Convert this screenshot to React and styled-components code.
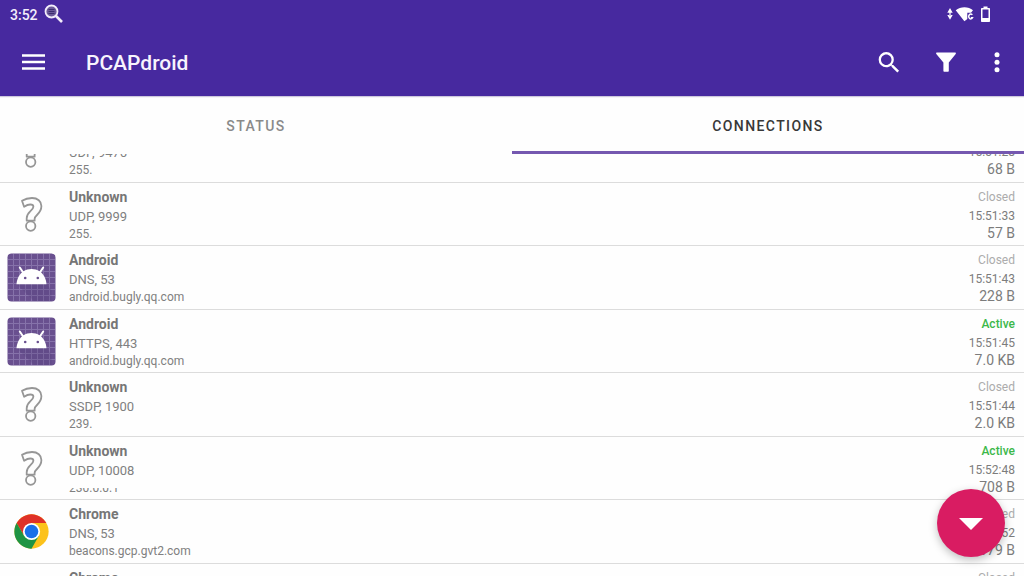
import React, { useLayoutEffect, useRef } from "react";
import styled, { createGlobalStyle, css } from "styled-components";

const Global = createGlobalStyle`
  *, *::before, *::after { box-sizing: border-box; }
  body { margin: 0; background: #fff; font-family: Roboto, "Liberation Sans", sans-serif; }
`;

const Screen = styled.div`
  display: flex;
  flex-direction: column;
  height: 100vh;
  overflow: hidden;
  background: #fefefe;
`;

const Header = styled.header`
  flex: none;
  background: #47299f;
  color: #fff;
  box-shadow: 0 1px 1px rgba(60, 40, 120, 0.25);
`;

const StatusBar = styled.div`
  display: flex;
  align-items: center;
  height: 28px;
  padding: 0 31px 0 10px;
`;

const Clock = styled.time`
  margin-right: 6px;
  padding-top: 2px;
  font-size: 14px;
  font-weight: 500;
  line-height: 26px;
  color: #f3edfb;
`;

const StatusIcons = styled.div`
  display: flex;
  align-items: center;
  margin-left: auto;
`;

const Toolbar = styled.div`
  display: flex;
  align-items: center;
  height: 68px;
  padding: 0 20px 0 19px;
`;

const Title = styled.h1`
  flex: 1;
  margin: 0 0 0 37px;
  padding-top: 2px;
  font-size: 21px;
  font-weight: 500;
  line-height: 24px;
  color: #f8f4fd;
`;

const Actions = styled.div`
  display: flex;
  gap: 28px;
`;

const IconButton = styled.button`
  display: flex;
  align-items: center;
  justify-content: center;
  width: ${(p) => (p.$narrow ? "15px" : "30px")};
  height: 40px;
  padding: 0;
  border: 0;
  background: none;
  color: #fff;
  cursor: pointer;
`;

const Tabs = styled.div`
  display: flex;
  flex: none;
  height: 58px;
`;

const Tab = styled.button`
  flex: 1;
  padding: 4px 0 0;
  border: 0;
  border-bottom: 3px solid ${(p) => (p.$active ? "#7558b0" : "transparent")};
  background: none;
  font: 500 14px/20px Roboto, "Liberation Sans", sans-serif;
  letter-spacing: 0.1em;
  text-transform: uppercase;
  color: ${(p) => (p.$active ? "#383838" : "#8a8a8a")};
  cursor: pointer;
`;

const List = styled.ul`
  flex: 1;
  min-height: 0;
  margin: 0;
  padding: 0;
  overflow-y: auto;
  scrollbar-width: none;
  list-style: none;
`;

const Row = styled.li`
  display: flex;
  height: 63px;
  padding: 5px 9px 0 7px;
  border-bottom: 1px solid #dcdcdc;

  &:nth-child(odd) { height: 64px; }
`;

const AppIcon = styled.div`
  display: flex;
  flex: none;
  align-items: center;
  justify-content: center;
  width: 49px;
  height: 53px;
  margin-right: 13px;
`;

const Details = styled.div`
  flex: 1;
  min-width: 0;
`;

const Name = styled.div`
  font-size: 14px;
  font-weight: 700;
  line-height: 19px;
  color: #767676;
`;

const Protocol = styled.div`
  font-size: 13px;
  line-height: 19px;
  color: #808080;
`;

const Host = styled.div`
  font-size: 12px;
  line-height: 16px;
  color: #808080;
  ${(p) => p.$masked && css`clip-path: inset(8px 0 0 0);`}
`;

const Stats = styled.div`
  flex: none;
  text-align: right;
`;

const State = styled.div`
  font-size: 12px;
  font-weight: ${(p) => (p.$active ? 500 : 400)};
  line-height: 19px;
  color: ${(p) => (p.$active ? "#3cb84a" : "#acacac")};
`;

const Time = styled.div`
  font-size: 12px;
  line-height: 18px;
  color: #7c7c7c;
`;

const Size = styled.div`
  font-size: 14px;
  line-height: 16px;
  color: #7c7c7c;
`;

const Fab = styled.button`
  position: fixed;
  right: 19px;
  bottom: 19px;
  display: flex;
  align-items: center;
  justify-content: center;
  width: 68px;
  height: 68px;
  padding: 2px 0 0;
  border: 0;
  border-radius: 50%;
  background: #d91c62;
  box-shadow: 0 3px 8px rgba(0, 0, 0, 0.25);
  cursor: pointer;
`;

const Notice = () => (
  <svg width="20" height="20" viewBox="0 0 20 20" fill="none" stroke="#f3edfb">
    <circle cx="7.5" cy="7.5" r="6" strokeWidth="1.8" fill="#6c5a9a" />
    <path d="M4.500 5.500h6M4.500 7.500h6M4.500 9.500h6" stroke="#3c2d70" strokeWidth="1" />
    <path d="M12 12l6 6" strokeWidth="2.6" />
  </svg>
);

const Network = () => (
  <svg width="46" height="20" viewBox="0 0 46 20" fill="#fff">
    <path d="M0.300 8.700L3 4l2.700 4.700zM0.300 11L3 15.700 5.700 11zM2.400 8h1.200v3.500H2.400z" />
    <path d="M8.700 6.200C13.500 2.300 21.500 2.300 26 6.200L24 8.800H20.300v6.200L17.400 17.300z" />
    <path d="M25.300 10.800a2 2.500 0 1 0 .2 3h-1.700" fill="none" stroke="#fff" strokeWidth="1.400" />
    <path fillRule="evenodd" d="M36.500 2.500h4v1.500h1.700q.8 0 .8.800v12.400q0 .8-.8.800h-7.400q-.8 0-.8-.8V4.800q0-.8.8-.8H36.500zM35.500 5.500V14h6V5.500z" />
  </svg>
);

const Menu = () => (
  <svg width="24" height="18" viewBox="0 0 24 18" fill="none" stroke="#fff" strokeWidth="2.400">
    <path d="M0 2.500h23M0 9h23M0 15.500h23" />
  </svg>
);

const Search = () => (
  <svg width="28" height="28" viewBox="-1 -0.5 24 24" fill="#fff">
    <path d="M15.500 14h-.79l-.28-.27A6.471 6.471 0 0 0 16 9.500 6.500 6.500 0 1 0 9.500 16c1.610 0 3.090-.59 4.230-1.570l.27.28v.79l5 4.990L20.490 19l-4.990-5zm-6 0C7.010 14 5 11.990 5 9.500S7.010 5 9.500 5 14 7.010 14 9.500 11.990 14 9.500 14z" />
  </svg>
);

const Filter = () => (
  <svg width="22" height="22" viewBox="0 0 22 22" fill="#fff">
    <path d="M1.500 1.500h19q.800.700.200 1.500L13.800 11.500V20q0 .8-.8.800H9.200q-.8 0-.8-.8V11.500L1.300 3Q.700 2.200 1.500 1.500z" />
  </svg>
);

const More = () => (
  <svg width="8" height="22" viewBox="0 0 8 22" fill="#fff">
    <circle cx="4" cy="3.800" r="2.500" />
    <circle cx="4" cy="11.300" r="2.500" />
    <circle cx="4" cy="18.800" r="2.500" />
  </svg>
);

const Question = () => (
  <svg width="24" height="38" viewBox="0 0 24 38" fill="none" stroke="#969696" strokeWidth="1.800" strokeLinejoin="round">
    <path d="M2 4.800C5 2.900 8.500 2 12 2c5.600 0 9.400 3.300 9.400 8 0 4-1.800 6.500-4.400 9-1.800 1.700-2.400 2.500-2.400 4v1.700H6.700v-2.400c0-3 1.100-4.800 3.500-7 2-1.900 3.200-2.900 3.200-4.500 0-1.500-1.100-2.300-3.100-2.300-2 0-4 .8-6.200 2.200z" />
    <circle cx="10.700" cy="30.100" r="4.700" />
  </svg>
);

const LINES = [6, 12, 18, 24, 30, 36, 42];

const AndroidLogo = () => (
  <svg width="49" height="49" viewBox="0 0 49 49">
    <rect x="0.500" y="0.500" width="48" height="48" rx="4" fill="#69508f" />
    <g stroke="#8672aa" strokeWidth="1">
      {LINES.map((n) => (
        <path key={n} d={`M${n + 0.5} 1v47M1 ${n + 0.5}h47`} />
      ))}
    </g>
    <path d="M9.500 31h30l5 6v11H27z" fill="#4e3b78" opacity="0.250" />
    <path d="M12.800 14.500l4 6M36.200 14.500l-4 6" stroke="#fff" strokeWidth="2" strokeLinecap="round" />
    <path d="M9.500 31.200C10 25 12.500 21 16.500 18.200 21 15.400 28 15.400 32.500 18.200 36.500 21 39 25 39.500 31.200z" fill="#fff" />
    <circle cx="18.200" cy="25" r="1.300" fill="#69508f" />
    <circle cx="30.800" cy="25" r="1.300" fill="#69508f" />
  </svg>
);

const ChromeLogo = () => (
  <svg width="35" height="35" viewBox="0 0 48 48">
    <circle cx="24" cy="24" r="23.500" fill="#fcc21b" />
    <path d="M24 12.250h20.350A23.500 23.500 0 0 0 3.650 12.250L13.820 29.870z" fill="#df3128" />
    <path d="M3.650 12.250A23.500 23.500 0 0 0 24 47.500l10.170-17.630L24 24 13.820 29.870z" fill="#1f9444" />
    <circle cx="24" cy="24" r="11.750" fill="#fff" />
    <circle cx="24" cy="24" r="9.300" fill="#1b6fe8" />
  </svg>
);

const ICONS = { Unknown: Question, Android: AndroidLogo, Chrome: ChromeLogo };

const CONNECTIONS = [
  { app: "Unknown", protocol: "UDP, 9476", host: "255.", state: "Closed", time: "15:51:28", size: "68 B" },
  { app: "Unknown", protocol: "UDP, 9999", host: "255.", state: "Closed", time: "15:51:33", size: "57 B" },
  { app: "Android", protocol: "DNS, 53", host: "android.bugly.qq.com", state: "Closed", time: "15:51:43", size: "228 B" },
  { app: "Android", protocol: "HTTPS, 443", host: "android.bugly.qq.com", state: "Active", time: "15:51:45", size: "7.0 KB" },
  { app: "Unknown", protocol: "SSDP, 1900", host: "239.", state: "Closed", time: "15:51:44", size: "2.0 KB" },
  { app: "Unknown", protocol: "UDP, 10008", host: "230.0.0.1", masked: true, state: "Active", time: "15:52:48", size: "708 B" },
  { app: "Chrome", protocol: "DNS, 53", host: "beacons.gcp.gvt2.com", state: "Closed", time: "15:52:52", size: "179 B" },
  { app: "Chrome", protocol: "HTTPS, 443", host: "beacons.gcp.gvt2.com", state: "Closed", time: "15:52:52", size: "7.1 KB" },
];

const SCROLL_OFFSET = 35;

function Connection({ app, protocol, host, masked, state, time, size }) {
  const Icon = ICONS[app];
  return (
    <Row>
      <AppIcon><Icon /></AppIcon>
      <Details>
        <Name>{app}</Name>
        <Protocol>{protocol}</Protocol>
        <Host $masked={masked}>{host}</Host>
      </Details>
      <Stats>
        <State $active={state === "Active"}>{state}</State>
        <Time>{time}</Time>
        <Size>{size}</Size>
      </Stats>
    </Row>
  );
}

export default function App() {
  const list = useRef(null);

  useLayoutEffect(() => {
    list.current.scrollTop = SCROLL_OFFSET;
  }, []);

  return (
    <Screen>
      <Global />
      <Header>
        <StatusBar>
          <Clock>3:52</Clock>
          <Notice />
          <StatusIcons><Network /></StatusIcons>
        </StatusBar>
        <Toolbar>
          <IconButton aria-label="Menu"><Menu /></IconButton>
          <Title>PCAPdroid</Title>
          <Actions>
            <IconButton aria-label="Search"><Search /></IconButton>
            <IconButton aria-label="Filter"><Filter /></IconButton>
            <IconButton $narrow aria-label="More options"><More /></IconButton>
          </Actions>
        </Toolbar>
      </Header>
      <Tabs role="tablist">
        <Tab role="tab" aria-selected="false">Status</Tab>
        <Tab role="tab" aria-selected="true" $active>Connections</Tab>
      </Tabs>
      <List ref={list}>
        {CONNECTIONS.map((c, i) => (
          <Connection key={i} {...c} />
        ))}
      </List>
      <Fab aria-label="Scroll to bottom">
        <svg width="24" height="12" viewBox="0 0 24 12" fill="#fff"><path d="M0 0h24L12 12z" /></svg>
      </Fab>
    </Screen>
  );
}
